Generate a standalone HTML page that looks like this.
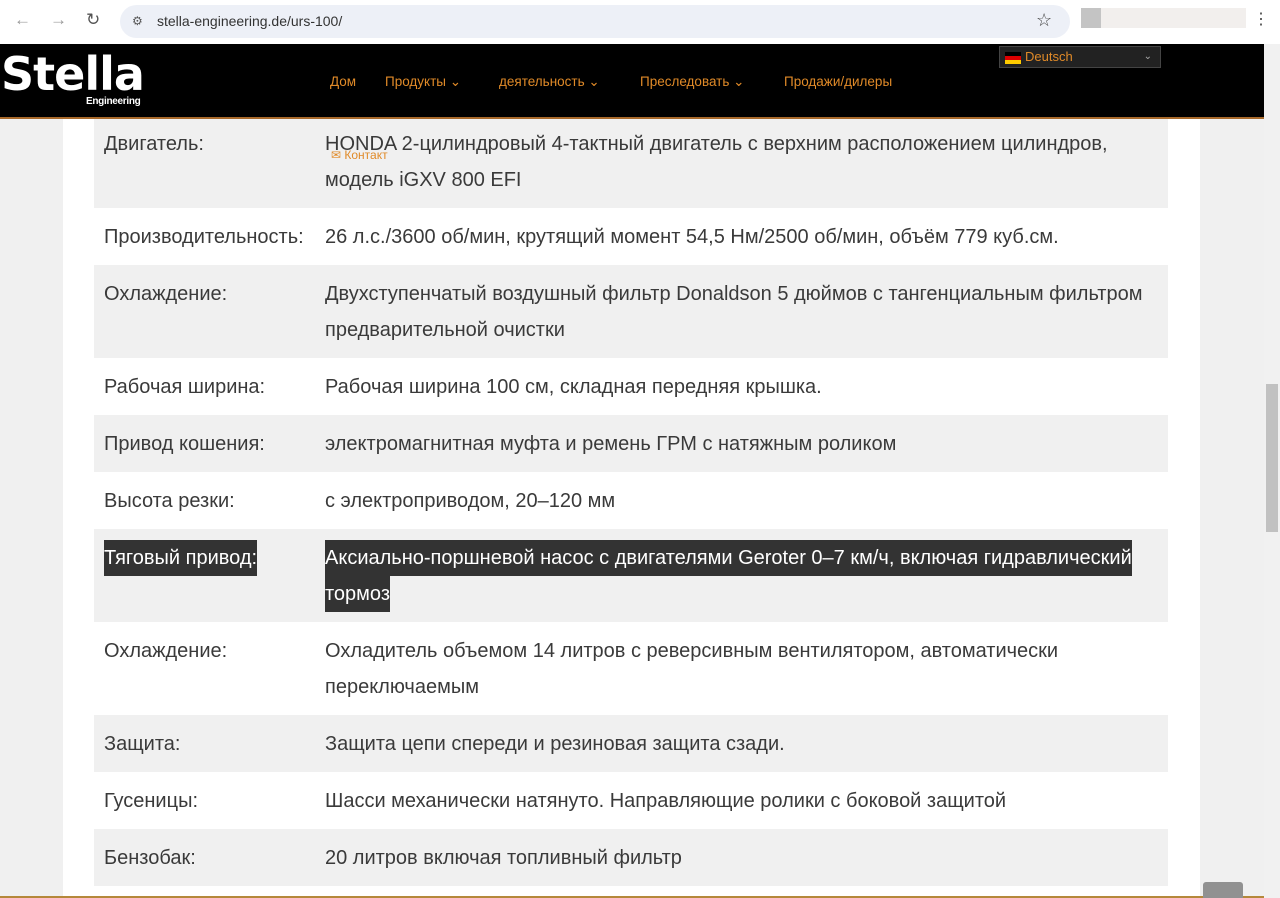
<!DOCTYPE html>
<html><head><meta charset="utf-8"><style>
*{margin:0;padding:0;box-sizing:border-box}
body{width:1280px;height:898px;overflow:hidden;background:#f0f0f0;font-family:"Liberation Sans",sans-serif;position:relative}
.chrome{position:absolute;left:0;top:0;width:1280px;height:44px;background:#fff;z-index:3}
.url{position:absolute;left:120px;top:5px;width:950px;height:33px;border-radius:17px;background:#edf0f7;font-size:14px;color:#333;line-height:33px;padding-left:37px}
.hdr{position:absolute;left:0;top:44px;width:1264px;height:75px;background:#000;border-bottom:2px solid #a8692a;z-index:2}
.nav{position:absolute;top:74px;font-size:13.5px;color:#e08a28;z-index:3}
.sb{position:absolute;left:1264px;top:44px;width:16px;height:854px;background:#f1f1f1}
.wrap{position:absolute;left:63px;top:119px;width:1137px;height:779px;background:#fff}
table{position:absolute;left:94px;top:115px;width:1074px;border-collapse:collapse;font-size:20px;color:#3a3a3a}
td{padding:10.5px 10px;line-height:36px;vertical-align:top}
td:first-child{width:221px}
tr:nth-child(odd){background:#f0f0f0}
.hl{background:#333;color:#fff;padding:7px 0}
</style></head><body>
<div class="chrome">
<span style="position:absolute;left:14px;top:10px;color:#999;font-size:17px">←</span>
<span style="position:absolute;left:50px;top:10px;color:#999;font-size:17px">→</span>
<span style="position:absolute;left:86px;top:10px;color:#555;font-size:17px">↻</span>
<div class="url"><span style="position:absolute;left:12px;color:#555;font-size:12px">⚙</span>stella-engineering.de/urs-100/</div>
<span style="position:absolute;left:1036px;top:10px;font-size:18px;color:#444">☆</span>
<div style="position:absolute;left:1081px;top:8px;width:20px;height:20px;background:#c4c4c4"></div>
<div style="position:absolute;left:1101px;top:8px;width:145px;height:20px;background:#f2efed"></div>
<span style="position:absolute;left:1253px;top:9px;font-size:16px;color:#444">⋮</span>
</div>
<div class="hdr">
<div style="position:absolute;left:1px;top:2px;color:#fff;font-size:46px;font-weight:bold;letter-spacing:-1px;font-family:'DejaVu Sans',sans-serif;line-height:56px">Stella</div>
<div style="position:absolute;left:86px;top:52px;color:#fff;font-size:10px;font-weight:bold;letter-spacing:-0.3px">Engineering</div>
<div style="position:absolute;left:999px;top:2px;width:162px;height:22px;background:#222;border:1px solid #444;color:#e08a28;font-size:13px;line-height:20px;padding-left:25px"><span style="position:absolute;left:5px;top:5px;width:16px;height:12px;background:linear-gradient(#000 33%,#d00 33% 66%,#fc0 66%)"></span>Deutsch<span style="position:absolute;right:8px;color:#aaa;font-size:10px">⌄</span></div>
</div>
<div class="nav" style="left:330px">Дом</div>
<div class="nav" style="left:385px">Продукты ⌄</div>
<div class="nav" style="left:499px">деятельность ⌄</div>
<div class="nav" style="left:640px">Преследовать ⌄</div>
<div class="nav" style="left:784px">Продажи/дилеры</div>
<div class="sb"><div style="position:absolute;left:2px;top:340px;width:12px;height:148px;background:#c1c1c1"></div></div>
<div class="wrap"></div>
<table>
<tr><td>Двигатель:</td><td>HONDA 2-цилиндровый 4-тактный двигатель с верхним расположением цилиндров, модель iGXV 800 EFI</td></tr>
<tr><td>Производительность:</td><td>26 л.с./3600 об/мин, крутящий момент 54,5 Нм/2500 об/мин, объём 779 куб.см.</td></tr>
<tr><td>Охлаждение:</td><td>Двухступенчатый воздушный фильтр Donaldson 5 дюймов с тангенциальным фильтром предварительной очистки</td></tr>
<tr><td>Рабочая ширина:</td><td>Рабочая ширина 100 см, складная передняя крышка.</td></tr>
<tr><td>Привод кошения:</td><td>электромагнитная муфта и ремень ГРМ с натяжным роликом</td></tr>
<tr><td>Высота резки:</td><td>с электроприводом, 20–120 мм</td></tr>
<tr><td><span class="hl">Тяговый привод:</span></td><td><span class="hl">Аксиально-поршневой насос с двигателями Geroter 0–7 км/ч, включая гидравлический тормоз</span></td></tr>
<tr><td>Охлаждение:</td><td>Охладитель объемом 14 литров с реверсивным вентилятором, автоматически переключаемым</td></tr>
<tr><td>Защита:</td><td>Защита цепи спереди и резиновая защита сзади.</td></tr>
<tr><td>Гусеницы:</td><td>Шасси механически натянуто. Направляющие ролики с боковой защитой</td></tr>
<tr><td>Бензобак:</td><td>20 литров включая топливный фильтр</td></tr>
</table>
<div style="position:absolute;left:331px;top:148px;font-size:12px;color:#e08a28">✉ Контакт</div>
<div style="position:absolute;left:0;top:896px;width:1264px;height:2px;background:#b5883a"></div>
<div style="position:absolute;left:1203px;top:882px;width:40px;height:16px;background:#919191;border-radius:3px 3px 0 0"></div>
</body></html>
